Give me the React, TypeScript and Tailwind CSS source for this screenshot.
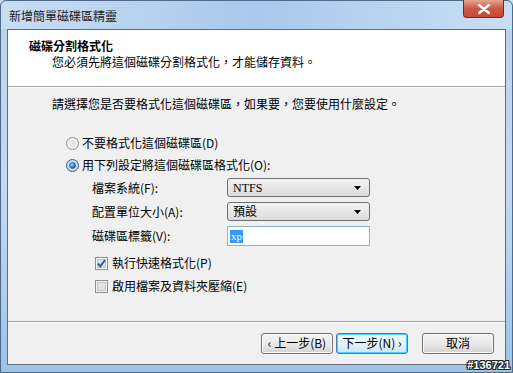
import React from "react";

const F = { fontFamily: '"Noto Sans CJK TC", "Noto Sans", sans-serif' };

function Radio({ checked }: { checked?: boolean }) {
  return (
    <svg width="13" height="13" viewBox="0 0 13 13" className="shrink-0">
      <defs>
        <radialGradient id={checked ? "rg1" : "rg0"} cx="0.5" cy="0.5" r="0.5">
          <stop offset="0" stopColor={checked ? "#e6f2fb" : "#e0e0e0"} />
          <stop offset="1" stopColor={checked ? "#b9d5ee" : "#f4f4f4"} />
        </radialGradient>
        <radialGradient id="dot" cx="0.4" cy="0.35" r="0.6">
          <stop offset="0" stopColor="#9fd5f6" />
          <stop offset="1" stopColor="#1b5ca3" />
        </radialGradient>
      </defs>
      <circle cx="6.5" cy="6.5" r="6" fill={`url(#${checked ? "rg1" : "rg0"})`} stroke={checked ? "#2c628b" : "#8e8f8f"} strokeWidth="1" />
      {checked && <circle cx="6.5" cy="6.5" r="3" fill="url(#dot)" stroke="#1a4f86" strokeWidth="0.6" />}
    </svg>
  );
}

function Check({ checked }: { checked?: boolean }) {
  return (
    <svg width="13" height="13" viewBox="0 0 13 13" className="shrink-0">
      <rect x="0.5" y="0.5" width="12" height="12" fill="#f4f4f4" stroke="#8e8f8f" />
      <rect x="2.5" y="2.5" width="8" height="8" fill="#e2e2e2" stroke="#c4c4c4" />
      {checked && <path d="M3 6.5 L5.3 9.3 L10 3" fill="none" stroke="#2d5fa8" strokeWidth="2" />}
    </svg>
  );
}

function Select({ value }: { value: string }) {
  return (
    <div className="w-[143px] h-[19px] rounded-[3px] border border-[#707070] bg-gradient-to-b from-[#f4f4f4] to-[#dadada] flex items-center justify-between pl-[5px] pr-[8px]">
      <span className="text-[12px] leading-[12px] text-black" style={{ fontFamily: '"Liberation Serif", "Noto Sans CJK TC", serif' }}>{value}</span>
      <svg width="7" height="4" viewBox="0 0 7 4"><path d="M0 0 H7 L3.5 4 Z" fill="#000" /></svg>
    </div>
  );
}

function Btn({ children, focus }: { children: React.ReactNode; focus?: boolean }) {
  return (
    <div className={`w-[72px] h-[21px] rounded-[3px] border flex items-center justify-center text-[12px] leading-[12px] text-black ${focus ? "border-[#3c7fb1] bg-gradient-to-b from-[#f2f9fd] via-[#e4f2fb] to-[#cde6f7] shadow-[inset_0_0_0_1px_#48d5fd]" : "border-[#707070] bg-gradient-to-b from-[#f2f2f2] via-[#ebebeb] to-[#d2d2d2] shadow-[inset_0_0_0_1px_#fcfcfc]"}`}>
      {children}
    </div>
  );
}

export default function App() {
  return (
    <div className="w-[513px] h-[373px] relative overflow-hidden flex flex-col bg-gradient-to-b from-[#b9d1ea] via-[#c3dbf2] to-[#9ec3e6]" style={F}>
      <div className="absolute inset-0 border border-[#4d6a8a] rounded-t-[6px] pointer-events-none" />
      <div className="h-[29px] shrink-0 flex items-center pl-[9px] bg-gradient-to-r from-[#c9ddf2] via-[#a9c9ec] to-[#c9def3]">
        <span className="text-[12px] leading-[12px] text-[#1a1a1a] mt-[2px]">新增簡單磁碟區精靈</span>
      </div>
      <div className="absolute right-[9px] top-0 w-[41px] h-[18px] rounded-b-[4px] border border-[#6b2a22] border-t-0 bg-gradient-to-b from-[#e8a493] via-[#c75a44] to-[#c94a2e] flex items-center justify-center">
        <svg width="12" height="10" viewBox="0 0 12 10"><path d="M1 1 L11 9 M11 1 L1 9" stroke="#fff" strokeWidth="2.6" strokeLinecap="round" /></svg>
      </div>
      <div className="mx-[7px] mb-[8px] flex-1 border border-[#5c6d80] bg-[#f0f0f0] flex flex-col">
        <div className="h-[56px] bg-white pt-[9px] pl-[21px] flex flex-col">
          <div className="text-[12px] leading-[14px] font-bold text-black">磁碟分割格式化</div>
          <div className="text-[12px] leading-[14px] text-black pl-[23px] mt-[2px]">您必須先將這個磁碟分割格式化，才能儲存資料。</div>
        </div>
        <div className="h-px bg-[#a0a0a0]" />
        <div className="h-px bg-white" />
        <div className="flex-1 flex flex-col pl-[44px] pt-[9px] text-[12px] leading-[14px] text-black">
          <div>請選擇您是否要格式化這個磁碟區，如果要，您要使用什麼設定。</div>
          <div className="mt-[24px] pl-[14px] flex flex-col">
            <div className="flex items-center gap-[3px] h-[16px]"><Radio /><span>不要格式化這個磁碟區(D)</span></div>
            <div className="flex items-center gap-[3px] h-[16px] mt-[6px]"><Radio checked /><span>用下列設定將這個磁碟區格式化(O):</span></div>
            <div className="pl-[26px] mt-[5px] flex flex-col gap-[5px]">
              <div className="flex items-center h-[19px]"><span className="w-[135px]">檔案系統(F):</span><Select value="NTFS" /></div>
              <div className="flex items-center h-[19px]"><span className="w-[135px]">配置單位大小(A):</span><Select value="預設" /></div>
              <div className="flex items-center h-[20px]"><span className="w-[135px]">磁碟區標籤(V):</span>
                <div className="w-[143px] h-[20px] border border-[#abadb3] border-t-[#8fb2cc] bg-white flex items-center pl-[2px]">
                  <span className="bg-[#3399ff] text-white text-[11px] leading-[13px] px-[1px]" style={{ fontFamily: '"Liberation Serif", serif' }}>xp</span>
                </div>
              </div>
            </div>
            <div className="pl-[29px] mt-[9px] flex flex-col gap-[7px]">
              <div className="flex items-center gap-[4px] h-[16px]"><Check checked /><span>執行快速格式化(P)</span></div>
              <div className="flex items-center gap-[4px] h-[16px]"><Check /><span>啟用檔案及資料夾壓縮(E)</span></div>
            </div>
          </div>
        </div>
        <div className="h-px bg-[#a0a0a0]" />
        <div className="h-px bg-white" />
        <div className="h-[41px] flex items-center justify-end pr-[11px] pb-[1px]">
          <Btn>‹ 上一步(B)</Btn>
          <div className="w-[3px]" />
          <Btn focus>下一步(N) ›</Btn>
          <div className="w-[14px]" />
          <Btn>取消</Btn>
        </div>
      </div>
      <div className="absolute right-[3px] bottom-[1px] text-[11px] leading-[13px] font-bold text-white [text-shadow:1px_0_0_#222,-1px_0_0_#222,0_1px_0_#222,0_-1px_0_#222,1px_1px_0_#222,-1px_-1px_0_#222,1px_-1px_0_#222,-1px_1px_0_#222]" style={{ fontFamily: '"Liberation Sans", sans-serif' }}>#136721</div>
    </div>
  );
}
